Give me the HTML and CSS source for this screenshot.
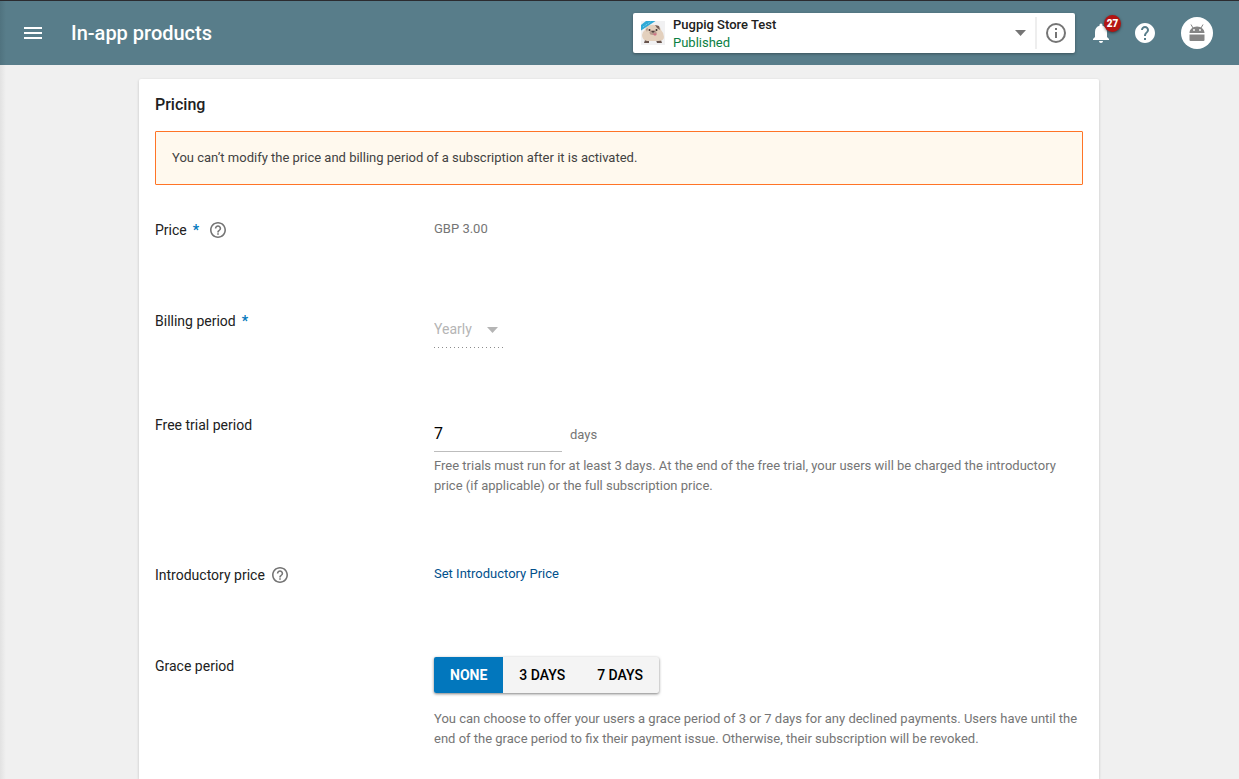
FILE: index.html
```html
<!DOCTYPE html>
<html lang="en">
<head>
<meta charset="utf-8">
<title>In-app products</title>
<link rel="stylesheet" href="styles.css">
</head>
<body>
<header class="topbar">
  <button class="icon-btn menu-btn" aria-label="Menu">
    <svg width="18" height="12" viewBox="0 0 18 12" fill="#fff"><path d="M0 0h18v2H0zM0 5h18v2H0zM0 10h18v2H0z"/></svg>
  </button>
  <h1 class="title">In-app products</h1>
  <div class="app-picker">
    <button class="app-select">
      <svg class="app-icon" width="24" height="24" viewBox="0 0 24 24">
        <rect width="24" height="24" fill="#f1f1f2"/>
        <path d="M4 19h4v3H3zM15 19h5l1 3h-5z" fill="#67534c"/>
        <path d="M5 6Q9 3 14 4Q19 4 20 9Q23 12 23 16Q23 20 17 20H6Q1 19 1 14Q1 11 4 9Z" fill="#e3d0bd"/>
        <path d="M14 4l4 1 1 4-3-2z" fill="#76615a"/>
        <path d="M5 8l2-1-1 4z" fill="#a98f80"/>
        <ellipse cx="12" cy="11.500" rx="3.500" ry="2.500" fill="#b59c8e"/>
        <circle cx="8.500" cy="9" r="1" fill="#3d3131"/><circle cx="15.500" cy="9" r="1" fill="#3d3131"/>
        <path d="M10 10h4l-2 2z" fill="#51403f"/><path d="M12 12.500h4l-1 2h-2z" fill="#cf7187"/>
        <path d="M5 0h9.500L0 9.500V4z" fill="#2fa9d6"/><path d="M2 6l8-5.500" stroke="#8bd3ec" stroke-width="1" stroke-dasharray="1 1"/>
      </svg>
      <span class="app-text"><span class="app-name">Pugpig Store Test</span><span class="app-status">Published</span></span>
      <svg width="11" height="6" viewBox="0 0 11 6"><path d="M0 0h11L5.500 6z" fill="#757575"/></svg>
    </button>
    <button class="icon-btn info-btn" aria-label="App information">
      <svg width="20" height="20" viewBox="0 0 20 20" fill="#757575"><path d="M9 5h2v2H9zM9 9h2v6H9z"/><circle cx="10" cy="10" r="9" fill="none" stroke="#757575" stroke-width="2"/></svg>
    </button>
  </div>
  <div class="actions">
    <button class="icon-btn bell-btn" aria-label="Notifications">
      <svg width="16" height="20" viewBox="0 0 16 20" fill="#fff"><path d="M8 20c1.100 0 2-.9 2-2H6c0 1.100.9 2 2 2zM14 14V9c0-3.100-1.600-5.600-4.500-6.300V2a1.500 1.500 0 0 0-3 0v.7C3.600 3.400 2 5.900 2 9v5l-2 2v1h16v-1z"/></svg>
      <span class="badge">27</span>
    </button>
    <button class="icon-btn" aria-label="Help">
      <svg width="20" height="20" viewBox="2 2 20 20" fill="#fff"><path d="M12 2C6.480 2 2 6.480 2 12s4.480 10 10 10 10-4.480 10-10S17.520 2 12 2zm1 17h-2v-2h2v2zm2.070-7.750l-.9.92C13.450 12.900 13 13.500 13 15h-2v-.5c0-1.100.45-2.100 1.170-2.830l1.240-1.260c.37-.36.59-.86.59-1.410 0-1.100-.9-2-2-2s-2 .9-2 2H8c0-2.210 1.790-4 4-4s4 1.790 4 4c0 .88-.36 1.680-.93 2.250z"/></svg>
    </button>
    <button class="icon-btn avatar" aria-label="Account">
      <svg width="16" height="18" viewBox="0 0 16 18"><path d="M0.500 9C.5 5.500 3.500 2.500 8 2.500S15.500 5.500 15.500 9zM.5 10.500h15V16q0 1-1 1h-13q-1 0-1-1z" fill="#858585"/><path d="M2 .5L4 4M14 .5L12 4" stroke="#858585"/><circle cx="5" cy="6" r=".9" fill="#fff"/><circle cx="11" cy="6" r=".9" fill="#fff"/></svg>
    </button>
  </div>
</header>
<main class="page">
  <form class="card">
    <h2 class="heading">Pricing</h2>
    <p class="notice">You can’t modify the price and billing period of a subscription after it is activated.</p>
    <div class="rows">
      <div class="row">
        <div class="label">Price <span class="required">*</span>
          <button type="button" class="icon-btn" aria-label="About price"><svg class="help" width="16" height="16" viewBox="2 2 20 20"><use href="#help-outline"/></svg></button>
        </div>
        <div class="field muted">GBP 3.00</div>
      </div>
      <div class="row">
        <label class="label" for="billing">Billing period <span class="required">*</span></label>
        <div class="field billing">
          <div class="select-wrap">
            <select id="billing" class="select" disabled><option>Yearly</option></select>
            <svg class="select-arrow" width="11" height="6" viewBox="0 0 11 6"><path d="M0 0h11L5.500 6z" fill="#b5b5b5"/></svg>
          </div>
        </div>
      </div>
      <div class="row">
        <label class="label" for="trial">Free trial period</label>
        <div class="field trial">
          <div class="days"><input id="trial" class="input" type="text" value="7"><span class="unit">days</span></div>
          <p class="hint">Free trials must run for at least 3 days. At the end of the free trial, your users will be charged the introductory price (if applicable) or the full subscription price.</p>
        </div>
      </div>
      <div class="row">
        <div class="label">Introductory price
          <button type="button" class="icon-btn" aria-label="About introductory price"><svg class="help" width="16" height="16" viewBox="2 2 20 20"><use href="#help-outline"/></svg></button>
        </div>
        <div class="field"><a class="link" href="#">Set Introductory Price</a></div>
      </div>
      <div class="row">
        <div class="label" id="grace">Grace period</div>
        <div class="field grace">
          <div class="segments" role="group" aria-labelledby="grace">
            <button type="button" class="segment selected" aria-pressed="true">NONE</button>
            <button type="button" class="segment" aria-pressed="false">3 DAYS</button>
            <button type="button" class="segment" aria-pressed="false">7 DAYS</button>
          </div>
          <p class="hint">You can choose to offer your users a grace period of 3 or 7 days for any declined payments. Users have until the end of the grace period to fix their payment issue. Otherwise, their subscription will be revoked.</p>
        </div>
      </div>
    </div>
  </form>
</main>
<svg width="0" height="0" class="defs" aria-hidden="true"><defs><path id="help-outline" d="M11 18h2v-2h-2v2zm1-16C6.480 2 2 6.480 2 12s4.480 10 10 10 10-4.480 10-10S17.520 2 12 2zm0 18c-4.410 0-8-3.590-8-8s3.590-8 8-8 8 3.590 8 8-3.590 8-8 8zm0-14c-2.210 0-4 1.790-4 4h2c0-1.100.9-2 2-2s2 .9 2 2c0 2-3 1.750-3 5h2c0-2.250 3-2.500 3-5 0-2.210-1.790-4-4-4z"/></defs></svg>
</body>
</html>
```
FILE: styles.css
```css
* { box-sizing: border-box; }
body {
  margin: 0;
  min-height: 100vh;
  display: flex;
  flex-direction: column;
  background: linear-gradient(to right, #e2e2e2, #f0f0f0 6px);
  color: #212121;
  font: 14px/20px Roboto, sans-serif;
}
h1, h2, p { margin: 0; }
button { font: inherit; color: inherit; border: 0; padding: 0; background: none; cursor: pointer; }
svg { display: block; flex: none; }
.defs { position: absolute; }
.icon-btn { display: flex; align-items: center; justify-content: center; flex: none; }

.topbar {
  height: 65px;
  display: flex;
  align-items: center;
  padding: 0 26px 0 24px;
  border-top: 1px solid #2b2b2f;
  background: linear-gradient(to right, #50737f, #587d8a 6px);
}
.title { margin-left: 29px; font-size: 20px; line-height: 24px; font-weight: 500; color: #fff; flex: 1; }
.app-picker {
  width: 442px;
  height: 40px;
  display: flex;
  align-items: center;
  background: #fff;
  border-radius: 2px;
  box-shadow: 0 1px 3px rgba(0, 0, 0, .35);
}
.app-select { flex: 1; height: 32px; display: flex; align-items: center; gap: 8px; padding: 0 9px 0 8px; text-align: left; border-right: 2px solid #eee; }
.app-text { flex: 1; display: flex; flex-direction: column; padding-top: 2px; font-size: 13px; line-height: 18px; }
.app-name { font-weight: 500; }
.app-status { color: #0b8043; }
.info-btn { width: 38px; height: 40px; }
.actions { display: flex; align-items: center; margin-left: 18px; }
.bell-btn { position: relative; margin-right: 26px; }
.badge {
  position: absolute;
  left: 11px;
  top: -8px;
  width: 17px;
  height: 17px;
  border-radius: 50%;
  background: #b31412;
  color: #fff;
  font-size: 10px;
  line-height: 17px;
  font-weight: 900;
  box-shadow: 0 1px 3px rgba(0, 0, 0, .5);
}
.avatar { width: 32px; height: 32px; margin-left: 26px; border-radius: 50%; background: #fff; }

.page { flex: 1; display: flex; justify-content: center; padding: 14px 17px 0 16px; }
.card {
  width: 100%;
  max-width: 960px;
  padding: 16px;
  background: #fff;
  border-radius: 2px 2px 0 0;
  box-shadow: 0 1px 3px rgba(0, 0, 0, .2);
}
.heading { font-size: 16px; line-height: 20px; font-weight: 500; }
.notice {
  margin-top: 16px;
  padding: 16px;
  border: 1px solid #ff7426;
  border-radius: 1px;
  background: #fff9ee;
  color: #424242;
  font-size: 13px;
}
.rows { display: flex; flex-direction: column; gap: 64px; margin-top: 34px; }
.row { display: grid; grid-template-columns: 279px 1fr; min-height: 27px; }
.label { display: flex; align-items: center; align-self: start; padding-top: 1px; }
.required { margin: 0 11px 0 6px; color: #0277bd; font-weight: 700; }
.label > .icon-btn:only-child { margin-left: 7px; }
.help { fill: #757575; }
.field { font-size: 13px; color: #757575; }
.billing { padding: 9px 0 2px; }
.select-wrap {
  position: relative;
  width: 70px;
  padding-bottom: 1px;
  background: repeating-linear-gradient(to right, #8c8c8c 0 1px, transparent 1px 4px) bottom / 100% 1px no-repeat;
}
.select { display: block; width: 100%; height: 28px; padding: 0 0 8px; border: 0; background: none; appearance: none; font: 14px/20px Roboto, sans-serif; color: #b5b5b5; opacity: 1; }
.select-arrow { position: absolute; right: 6px; top: 8px; pointer-events: none; }
.trial { padding: 5px 0 4px; }
.days { display: flex; align-items: center; gap: 8px; margin-bottom: 4px; }
.unit { padding-bottom: 2px; }
.input { width: 128px; height: 33px; padding: 0 0 4px; border: 0; border-bottom: 1px solid #bdbdbd; outline: 0; background: none; font: 16px/24px Roboto, sans-serif; color: #000; }
.link { color: #01508c; text-decoration: none; }
.grace { padding-top: 2px; }
.segments { display: inline-flex; margin-bottom: 16px; vertical-align: top; border-radius: 2px; overflow: hidden; background: #f4f4f4; box-shadow: 0 1px 3px rgba(0, 0, 0, .5); }
.segment { height: 36px; padding: 0 16px; font-size: 14px; font-weight: 500; color: #000; }
.segment.selected { background: #0277bd; color: #fff; font-weight: 700; }
```
